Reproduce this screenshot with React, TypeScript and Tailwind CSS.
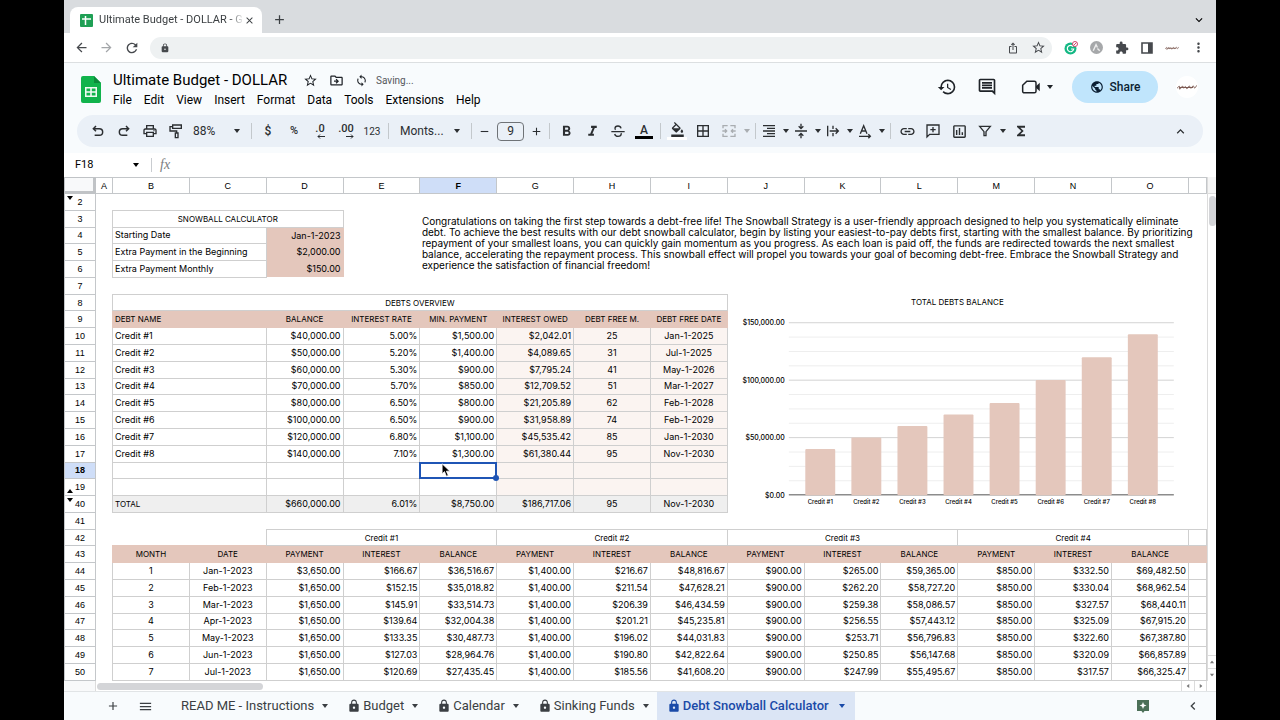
import React from 'react';
import {
  MdAdd, MdArrowBack, MdArrowForward, MdBorderAll, MdClose, MdExtension, MdFormatAlignRight,
  MdFormatBold, MdFormatColorFill, MdFormatItalic, MdFunctions, MdHistory, MdIosShare, MdKeyboardArrowDown,
  MdKeyboardArrowLeft, MdKeyboardArrowUp, MdLink, MdLock, MdMenu, MdMoreVert, MdOutlineDriveFileMove,
  MdOutlineInsertChart, MdOutlineInsertComment, MdOutlinePrint, MdPublic, MdRefresh,
  MdRemove, MdStarBorder, MdSync,
} from 'react-icons/md';

const MENUS = ['File', 'Edit', 'View', 'Insert', 'Format', 'Data', 'Tools', 'Extensions', 'Help'];
const COLUMNS = ['A', 'B', 'C', 'D', 'E', 'F', 'G', 'H', 'I', 'J', 'K', 'L', 'M', 'N', 'O'];

const INTRO = [
  'Congratulations on taking the first step towards a debt-free life! The Snowball Strategy is a user-friendly approach designed to help you systematically eliminate',
  'debt. To achieve the best results with our debt snowball calculator, begin by listing your easiest-to-pay debts first, starting with the smallest balance. By prioritizing',
  'repayment of your smallest loans, you can quickly gain momentum as you progress. As each loan is paid off, the funds are redirected towards the next smallest',
  'balance, accelerating the repayment process. This snowball effect will propel you towards your goal of becoming debt-free. Embrace the Snowball Strategy and',
  'experience the satisfaction of financial freedom!',
];

const DEBTS = [
  ['Credit #1', '$40,000.00', '5.00%', '$1,500.00', '$2,042.01', '25', 'Jan-1-2025'],
  ['Credit #2', '$50,000.00', '5.20%', '$1,400.00', '$4,089.65', '31', 'Jul-1-2025'],
  ['Credit #3', '$60,000.00', '5.30%', '$900.00', '$7,795.24', '41', 'May-1-2026'],
  ['Credit #4', '$70,000.00', '5.70%', '$850.00', '$12,709.52', '51', 'Mar-1-2027'],
  ['Credit #5', '$80,000.00', '6.50%', '$800.00', '$21,205.89', '62', 'Feb-1-2028'],
  ['Credit #6', '$100,000.00', '6.50%', '$900.00', '$31,958.89', '74', 'Feb-1-2029'],
  ['Credit #7', '$120,000.00', '6.80%', '$1,100.00', '$45,535.42', '85', 'Jan-1-2030'],
  ['Credit #8', '$140,000.00', '7.10%', '$1,300.00', '$61,380.44', '95', 'Nov-1-2030'],
];

const SCHEDULE = [
  ['1', 'Jan-1-2023', '$3,650.00', '$166.67', '$36,516.67', '$1,400.00', '$216.67', '$48,816.67', '$900.00', '$265.00', '$59,365.00', '$850.00', '$332.50', '$69,482.50'],
  ['2', 'Feb-1-2023', '$1,650.00', '$152.15', '$35,018.82', '$1,400.00', '$211.54', '$47,628.21', '$900.00', '$262.20', '$58,727.20', '$850.00', '$330.04', '$68,962.54'],
  ['3', 'Mar-1-2023', '$1,650.00', '$145.91', '$33,514.73', '$1,400.00', '$206.39', '$46,434.59', '$900.00', '$259.38', '$58,086.57', '$850.00', '$327.57', '$68,440.11'],
  ['4', 'Apr-1-2023', '$1,650.00', '$139.64', '$32,004.38', '$1,400.00', '$201.21', '$45,235.81', '$900.00', '$256.55', '$57,443.12', '$850.00', '$325.09', '$67,915.20'],
  ['5', 'May-1-2023', '$1,650.00', '$133.35', '$30,487.73', '$1,400.00', '$196.02', '$44,031.83', '$900.00', '$253.71', '$56,796.83', '$850.00', '$322.60', '$67,387.80'],
  ['6', 'Jun-1-2023', '$1,650.00', '$127.03', '$28,964.76', '$1,400.00', '$190.80', '$42,822.64', '$900.00', '$250.85', '$56,147.68', '$850.00', '$320.09', '$66,857.89'],
  ['7', 'Jul-1-2023', '$1,650.00', '$120.69', '$27,435.45', '$1,400.00', '$185.56', '$41,608.20', '$900.00', '$247.99', '$55,495.67', '$850.00', '$317.57', '$66,325.47'],
];

const BALANCES = [40, 50, 60, 70, 80, 100, 120, 140];

const line = 'border border-[#cfcfcf]';
const head = 'border border-[#e4c7bc] bg-[#e4c7bc] text-center text-[8px]';

/* ---------- icons ---------- */

const SheetsLogo = () => (
  <svg viewBox="0 0 20 27" className="h-[27px] w-5">
    <path d="M2 0h11l7 7v18a2 2 0 0 1-2 2H2a2 2 0 0 1-2-2V2a2 2 0 0 1 2-2z" fill="#11b34c" />
    <path d="M13 0l7 7h-7z" fill="#0b8a3a" />
    <path d="M4 11h12v10H4zM5.500 12.500v2.700h3.700v-2.700zM10.800 12.500v2.700h3.700v-2.700zM5.500 16.800v2.700h3.700v-2.700zM10.800 16.800v2.700h3.700v-2.700z" fill="#f1fbf4" fillRule="evenodd" />
  </svg>
);

const Favicon = () => (
  <svg viewBox="0 0 13 13" className="h-[13px] w-[13px] shrink-0">
    <rect width="13" height="13" rx="1" fill="#1fa055" />
    <path d="M5.500 2v9M2 5h9" stroke="#fff" strokeWidth="1.500" />
  </svg>
);

const Undo = ({ flip }: { flip?: boolean }) => (
  <svg viewBox="0 0 24 24" className={flip ? 'h-4 w-4 -scale-x-100' : 'h-4 w-4'} fill="none" stroke="currentColor" strokeWidth="2.200">
    <path d="M9 4.500L5 8.500l4 4M5.500 8.500h8.500a5 5 0 0 1 0 10H7" />
  </svg>
);

const PaintRoller = () => (
  <svg viewBox="0 0 24 24" className="h-4 w-4" fill="none" stroke="currentColor" strokeWidth="2">
    <path d="M7 3h13v5H7zM7 5.500H3v6.500h10v3M11 15h4v7h-4z" />
  </svg>
);

const Decimal = ({ text, more }: { text: string; more?: boolean }) => (
  <span className="flex flex-col items-center text-[11px] leading-[10px] font-medium">
    {text}
    <svg viewBox="0 0 8 5" className={more ? 'h-[5px] w-2 self-end' : 'h-[5px] w-2 -scale-x-100 self-end'} fill="none" stroke="currentColor">
      <path d="M0 2.500h7M5 .5l2 2-2 2" />
    </svg>
  </span>
);

const Strike = () => (
  <svg viewBox="0 0 24 24" className="h-4 w-4" fill="none" stroke="currentColor" strokeWidth="2">
    <path d="M2 13h20M16.500 8c-.5-2.500-2.500-3.500-4.500-3.500-2.500 0-4.500 1.300-4.500 3.500 0 .8.300 1.500.8 2M7 16.500c.6 2.300 2.700 3.500 5 3.500 2.600 0 4.800-1.200 4.800-3.500 0-.5-.1-1-.3-1.300" />
  </svg>
);

const MergeCells = () => (
  <svg viewBox="0 0 24 24" className="h-4 w-4" fill="none" stroke="#a9adb1" strokeWidth="2">
    <path d="M10 4H3v4M14 4h7v4M10 20H3v-4M14 20h7v-4M2 12h6M6 9.500l2.500 2.500L6 14.500M22 12h-6M18 9.500L15.500 12l2.500 2.500" />
  </svg>
);

const AlignMiddle = () => (
  <svg viewBox="0 0 24 24" className="h-4 w-4" fill="none" stroke="currentColor" strokeWidth="2">
    <path d="M3 12h18M12 1v7M12 23v-7M8.500 5L12 8.500 15.500 5M8.500 19l3.500-3.500 3.500 3.500" />
  </svg>
);

const Overflow = () => (
  <svg viewBox="0 0 24 24" className="h-4 w-4" fill="none" stroke="currentColor" strokeWidth="2">
    <path d="M4 4v16M12 4v5M12 15v5M7 12h13M16 8l4 4-4 4" />
  </svg>
);

const Rotate = () => (
  <svg viewBox="0 0 24 24" className="h-4 w-4" fill="none" stroke="currentColor" strokeWidth="2">
    <path d="M5 16l5-12 5 12M7 12h6M3 20h17M17 17l3 3-3 3" />
  </svg>
);

const AddComment = () => (
  <svg viewBox="0 0 24 24" className="h-4 w-4" fill="none" stroke="currentColor" strokeWidth="2">
    <path d="M3 3h18v14H7l-4 4zM12 6v8M8 10h8" />
  </svg>
);

const Funnel = () => (
  <svg viewBox="0 0 24 24" className="h-4 w-4" fill="none" stroke="currentColor" strokeWidth="2">
    <path d="M4 5h16l-6.500 8v6h-3v-6z" />
  </svg>
);

const MeetCamera = () => (
  <svg viewBox="0 0 24 24" className="h-5 w-5" fill="none" stroke="currentColor" strokeWidth="1.800">
    <path d="M7 5h9a2 2 0 0 1 2 2v10a2 2 0 0 1-2 2H4a2 2 0 0 1-2-2v-7z" />
    <path d="M18 11l4.500-4v10L18 13z" fill="currentColor" stroke="none" />
  </svg>
);

const Scribble = ({ className }: { className: string }) => (
  <svg viewBox="0 0 20 6" className={className} fill="none" stroke="#7d5a52" strokeWidth="1">
    <path d="M0 4.500c2-3 3-3 2.500-.5S4 4.500 5 2.500s1 2.500 2 1.500 1-2.500 2-.5 1 1.500 2 0 1-2.500 2-.5 1 1.500 2 0 1.500-1.500 2 .2 1.500.6 2.500-1.700" />
    <path d="M3 3.500h13" />
  </svg>
);

const Caret = ({ className = '' }: { className?: string }) => (
  <svg viewBox="0 0 6 4" className={`h-1 w-1.5 shrink-0 ${className}`}>
    <path d="M0 0h6L3 4z" fill="currentColor" />
  </svg>
);

/* ---------- browser chrome ---------- */

const TabStrip = () => (
  <div className="flex h-[33px] shrink-0 items-end bg-[#d9dcdf] pl-1.5">
    <div className="flex h-[26px] w-48 items-center rounded-t-lg bg-white pr-[7px] pl-2.5 text-[#3c4043]">
      <Favicon />
      <span className="ml-1.5 flex-1 mask-r-from-90% text-[11px] whitespace-nowrap">Ultimate Budget - DOLLAR - G</span>
      <button aria-label="Close tab"><MdClose size={11} /></button>
    </div>
    <button aria-label="New tab" className="mb-1.5 ml-2.5 text-[#3c4043]"><MdAdd size={15} /></button>
    <button aria-label="Search tabs" className="mr-2.5 mb-1.5 ml-auto"><MdKeyboardArrowDown size={14} /></button>
  </div>
);

const AddressRow = () => (
  <div className="flex h-[30px] shrink-0 items-center border-b border-[#dcdfe1] bg-white pr-2.5 pl-2.5 text-[#46494d]">
    <button aria-label="Back"><MdArrowBack size={15} /></button>
    <button aria-label="Forward" className="ml-2.5 text-[#a3a6a9]"><MdArrowForward size={15} /></button>
    <button aria-label="Reload" className="ml-2.5"><MdRefresh size={16} /></button>
    <div className="ml-2.5 flex h-[22px] flex-1 items-center rounded-full bg-[#eef1f2] pr-1.5 pl-2.5">
      <MdLock size={10} />
      <input aria-label="Address" className="min-w-0 flex-1 bg-transparent text-xs outline-none" />
      <button aria-label="Share page"><MdIosShare size={12} /></button>
      <button aria-label="Bookmark" className="ml-3"><MdStarBorder size={15} /></button>
    </div>
    <div className="ml-3 flex items-center gap-3">
      <svg viewBox="0 0 14 14" className="h-3.5 w-3.5">
        <circle cx="6.500" cy="7.500" r="6" fill="#14b884" />
        <path d="M9 5.500A3.200 3.200 0 1 0 9.700 8H7" fill="none" stroke="#fff" strokeWidth="1.200" />
        <circle cx="11" cy="3" r="2.500" fill="#fff" stroke="#d2466c" />
        <path d="M9.500 4.500l3-3" stroke="#d2466c" />
      </svg>
      <svg viewBox="0 0 14 14" className="h-[13px] w-[13px]">
        <circle cx="7" cy="7" r="7" fill="#a6a8aa" />
        <path d="M3.500 10.500l3-6.500 1.500 3M8 8l2.500 2.500" fill="none" stroke="#eee" strokeWidth="1.500" />
      </svg>
      <MdExtension size={14} />
      <svg viewBox="0 0 12 12" className="h-3 w-3">
        <path d="M1 1h10v10H1z" fill="none" stroke="currentColor" strokeWidth="1.600" />
        <path d="M7 1h4v10H7z" fill="currentColor" />
      </svg>
      <Scribble className="h-1.5 w-3.5" />
      <button aria-label="Browser menu"><MdMoreVert size={15} /></button>
    </div>
  </div>
);

/* ---------- document header ---------- */

const Header = () => (
  <div className="flex h-[52px] shrink-0 items-center pr-[18px] pl-[17px] text-[#1f2328]">
    <SheetsLogo />
    <div className="ml-3 pt-0.5">
      <div className="flex h-5 items-center">
        <input aria-label="Document name" defaultValue="Ultimate Budget - DOLLAR" className="w-[188px] bg-transparent text-[15px] text-black outline-none" />
        <button aria-label="Star" className="ml-0.5"><MdStarBorder size={15} /></button>
        <button aria-label="Move" className="ml-[11px]"><MdOutlineDriveFileMove size={15} /></button>
        <MdSync size={13} className="ml-[11px]" />
        <span className="ml-2 text-[10px] text-[#55585c]">Saving...</span>
      </div>
      <nav className="flex h-5 items-center gap-3 text-xs text-black">
        {MENUS.map((m) => <button key={m}>{m}</button>)}
      </nav>
    </div>
    <div className="ml-auto flex items-center pb-1">
      <button aria-label="Version history"><MdHistory size={20} /></button>
      <button aria-label="Comments" className="ml-5"><MdOutlineInsertComment size={20} /></button>
      <button aria-label="Call" className="ml-6 flex items-center gap-1.5"><MeetCamera /><Caret /></button>
      <button className="ml-[19px] flex h-8 w-[86px] items-center justify-center gap-1.5 rounded-full bg-[#c0e5fc] text-xs font-medium text-[#0b1f33]">
        <MdPublic size={14} />Share
      </button>
      <div className="ml-[18px] flex h-[22px] w-[22px] items-center justify-center rounded-full bg-white">
        <Scribble className="h-1.5 w-5" />
      </div>
    </div>
  </div>
);

const Tool = ({ label, wide, children }: { label: string; wide?: boolean; children: React.ReactNode }) => (
  <button aria-label={label} className={`flex h-6 shrink-0 items-center justify-center gap-1.5 ${wide ? 'w-8' : 'w-[26px]'}`}>
    {children}
  </button>
);

const Divider = () => <div className="mx-[3px] h-4 w-px shrink-0 bg-[#c3c8cc]" />;

const Toolbar = () => (
  <div className="mx-[13px] mb-1.5 flex h-8 shrink-0 items-center rounded-full bg-[#eaf0f7] pr-[15px] pl-2 text-[#2b2e31]">
    <Tool label="Undo"><Undo /></Tool>
    <Tool label="Redo"><Undo flip /></Tool>
    <Tool label="Print"><MdOutlinePrint size={16} /></Tool>
    <Tool label="Paint format"><PaintRoller /></Tool>
    <label className="ml-1 flex w-[55px] items-center justify-between pr-2">
      <select aria-label="Zoom" defaultValue="88%" className="appearance-none bg-transparent text-xs outline-none"><option>88%</option></select>
      <Caret />
    </label>
    <Divider />
    <Tool label="Currency"><span className="text-xs font-medium">$</span></Tool>
    <Tool label="Percent"><span className="text-[11px] font-medium">%</span></Tool>
    <Tool label="Decrease decimals"><Decimal text=".0" /></Tool>
    <Tool label="Increase decimals"><Decimal text=".00" more /></Tool>
    <Tool label="More formats"><span className="text-[10px]">123</span></Tool>
    <Divider />
    <label className="flex w-[76px] items-center justify-between pr-2 pl-2">
      <select aria-label="Font" defaultValue="Monts..." className="appearance-none bg-transparent text-xs outline-none"><option>Monts...</option></select>
      <Caret />
    </label>
    <Divider />
    <button aria-label="Smaller" className="ml-[3px]"><MdRemove size={13} /></button>
    <input aria-label="Font size" defaultValue="9" className="mx-1.5 h-[19px] w-[27px] rounded border border-[#6f7377] bg-transparent text-center text-xs outline-none" />
    <button aria-label="Larger" className="mr-[3px]"><MdAdd size={13} /></button>
    <Divider />
    <Tool label="Bold"><MdFormatBold size={17} /></Tool>
    <Tool label="Italic"><MdFormatItalic size={17} /></Tool>
    <Tool label="Strikethrough"><Strike /></Tool>
    <Tool label="Text color">
      <span className="flex w-[18px] flex-col items-center border-b-3 border-black text-xs leading-3 font-medium">A</span>
    </Tool>
    <Divider />
    <Tool label="Fill color">
      <span className="flex w-5 flex-col items-center border-b-3 border-white"><MdFormatColorFill size={15} /></span>
    </Tool>
    <Tool label="Borders"><MdBorderAll size={16} /></Tool>
    <Tool label="Merge cells"><MergeCells /></Tool>
    <Caret className="mx-0.5 text-[#a9adb1]" />
    <Divider />
    <Tool label="Horizontal align" wide><MdFormatAlignRight size={16} /><Caret /></Tool>
    <Tool label="Vertical align" wide><AlignMiddle /><Caret /></Tool>
    <Tool label="Text wrapping" wide><Overflow /><Caret /></Tool>
    <Tool label="Text rotation" wide><Rotate /><Caret /></Tool>
    <Divider />
    <Tool label="Insert link"><MdLink size={17} /></Tool>
    <Tool label="Insert comment"><AddComment /></Tool>
    <Tool label="Insert chart"><MdOutlineInsertChart size={17} /></Tool>
    <Tool label="Filter"><Funnel /></Tool>
    <Caret className="mx-0.5" />
    <Tool label="Functions"><MdFunctions size={16} /></Tool>
    <button aria-label="Hide the menus" className="ml-auto"><MdKeyboardArrowUp size={15} /></button>
  </div>
);

const FormulaBar = () => (
  <div className="flex h-6 shrink-0 items-center bg-white pl-[11px]">
    <input aria-label="Name box" defaultValue="F18" className="w-[58px] bg-transparent text-[11px] outline-none" />
    <Caret />
    <div className="ml-3 h-3.5 w-px bg-[#c9ccd0]" />
    <label htmlFor="formula" className="ml-2 font-['Liberation_Serif',serif] text-sm text-[#7a7d80] italic">fx</label>
    <input id="formula" className="ml-3 flex-1 text-xs outline-none" />
  </div>
);

/* ---------- sheet ---------- */

const BalanceChart = () => (
  <svg viewBox="0 0 480 235" className="block h-[235px] w-full" role="img" aria-label="Total debts balance">
    <text x="230" y="11" textAnchor="middle" fontSize="8" className="font-['Inter',sans-serif]">TOTAL DEBTS BALANCE</text>
    {Array.from({ length: 12 }, (_, i) => (
      <path key={i} d={`M61 ${28.500 + i * 14.400}h386`} stroke={i % 4 === 0 ? '#d3d3d3' : '#eeeeee'} />
    ))}
    <path d="M61 201h386" stroke="#8c8c8c" strokeWidth="1.500" />
    {BALANCES.map((b, i) => (
      <g key={b}>
        <rect x={77.500 + i * 46.200} y={201 - b * 1.150} width="30" height={b * 1.150 + 0.500} rx="1" fill="#e4c7bc" />
        <text x={92.500 + i * 46.200} y="210" textAnchor="middle" fontSize="6" fontWeight="500">Credit #{i + 1}</text>
      </g>
    ))}
    {['$150,000.00', '$100,000.00', '$50,000.00', '$0.00'].map((t, i) => (
      <text key={t} x="57" y={31 + i * 57.600} textAnchor="end" fontSize="7" fontWeight="500">{t}</text>
    ))}
  </svg>
);

interface RowProps {
  n: number;
  caret?: 'up' | 'down';
  children?: React.ReactNode;
}

const Row: React.FC<RowProps> = ({ n, caret, children }) => (
  <tr className="h-4">
    <th className={`relative border border-[#c4c7ca] text-center font-['Liberation_Sans',sans-serif] text-[9px] ${n === 18 ? 'bg-[#cfdef8] font-bold' : 'bg-white font-normal'}`}>
      {n}
      {caret && <Caret className={caret === 'up' ? 'absolute bottom-0.5 left-0.5 rotate-180' : 'absolute top-0.5 left-0.5'} />}
    </th>
    <td />
    {children}
  </tr>
);

const EmptyDebtCells = ({ selected }: { selected?: boolean }) => (
  <>
    <td colSpan={2} className={line} />
    <td className={line} />
    <td className={line} />
    <td className={`relative ${line}`}>
      {selected && (
        <div className="absolute -inset-px border-2 border-[#1f55b5]">
          <span className="absolute -right-1 -bottom-1 h-1.5 w-1.5 rounded-full bg-[#1f55b5]" />
          <svg viewBox="0 0 12 18" className="absolute -top-px left-5 h-3.5 w-2.5">
            <path d="M1 1v13l3-3 2.500 6 2.500-1-2.500-5.500H11z" fill="#000" stroke="#fff" />
          </svg>
        </div>
      )}
    </td>
    <td className={`bg-[#fbf4f1] ${line}`} />
    <td className={`bg-[#fbf4f1] ${line}`} />
    <td className={`bg-[#fbf4f1] ${line}`} />
  </>
);

const Sheet = () => (
  <table className="h-full w-full table-fixed border-collapse font-['Inter',sans-serif] text-[9px] leading-3 text-black [&_td]:px-0.5 [&_td]:py-0 [&_th]:p-0">
    <colgroup>
      <col className="w-[31px]" />
      <col className="w-[17px]" />
      {COLUMNS.slice(1).map((c) => <col key={c} />)}
      <col className="w-[18px]" />
    </colgroup>
    <thead className="font-['Liberation_Sans',sans-serif] text-[9px]">
      <tr className="h-4">
        <th className="border border-[#c0c3c6] bg-[#f8f9fa] shadow-[inset_-2px_-2px_0_#c0c3c6]" />
        {COLUMNS.map((c) => (
          <th key={c} className={`border border-[#c4c7ca] ${c === 'F' ? 'bg-[#cfdef8] font-bold' : 'bg-white font-normal'}`}>{c}</th>
        ))}
        <th className="border border-[#c4c7ca] bg-white" />
      </tr>
    </thead>
    <tbody>
      <Row n={2} caret="down" />
      <Row n={3}>
        <td colSpan={3} className={`text-center text-[8px] ${line}`}>SNOWBALL CALCULATOR</td>
        <td />
        <td colSpan={11} rowSpan={4} className="align-middle text-[10px] leading-[11px] whitespace-nowrap">
          {INTRO.map((t) => <div key={t}>{t}</div>)}
        </td>
      </Row>
      {[['Starting Date', 'Jan-1-2023'], ['Extra Payment in the Beginning', '$2,000.00'], ['Extra Payment Monthly', '$150.00']].map(([k, v], i) => (
        <Row key={k} n={4 + i}>
          <td colSpan={2} className={line}>{k}</td>
          <td className="border-r border-[#e4c7bc] bg-[#e4c7bc] text-right">{v}</td>
        </Row>
      ))}
      <Row n={7} />
      <Row n={8}>
        <td colSpan={8} className={`text-center text-[8px] ${line}`}>DEBTS OVERVIEW</td>
        <td colSpan={7} rowSpan={14} className="!p-0 align-top">
          {/* zero height, so the chart floats over the rows without stretching them */}
          <div className="h-0"><BalanceChart /></div>
        </td>
      </Row>
      <Row n={9}>
        <td colSpan={2} className="border border-[#e4c7bc] bg-[#e4c7bc] text-[8px]">DEBT NAME</td>
        {['BALANCE', 'INTEREST RATE', 'MIN. PAYMENT', 'INTEREST OWED', 'DEBT FREE M.', 'DEBT FREE DATE'].map((t) => (
          <td key={t} className={`whitespace-nowrap ${head}`}>{t}</td>
        ))}
      </Row>
      {DEBTS.map(([name, ...vals], i) => (
        <Row key={name} n={10 + i}>
          <td colSpan={2} className={line}>{name}</td>
          {vals.map((v, j) => (
            <td key={j} className={`${line} ${j > 2 ? 'bg-[#fbf4f1]' : ''} ${j > 3 ? 'text-center' : 'text-right'}`}>{v}</td>
          ))}
        </Row>
      ))}
      <Row n={18}><EmptyDebtCells selected /></Row>
      <Row n={19} caret="up"><EmptyDebtCells /></Row>
      <Row n={40} caret="down">
        <td colSpan={2} className={`bg-[#efefef] text-[8px] ${line}`}>TOTAL</td>
        {['$660,000.00', '6.01%', '$8,750.00', '$186,717.06', '95', 'Nov-1-2030'].map((v, j) => (
          <td key={v} className={`bg-[#efefef] ${line} ${j > 3 ? 'text-center' : 'text-right'}`}>{v}</td>
        ))}
      </Row>
      <Row n={41} />
      <Row n={42}>
        <td colSpan={2} />
        {[1, 2, 3, 4].map((n) => <td key={n} colSpan={3} className={`text-center text-[8px] ${line}`}>Credit #{n}</td>)}
        <td className={line} />
      </Row>
      <Row n={43}>
        <td className={head}>MONTH</td>
        <td className={head}>DATE</td>
        {[1, 2, 3, 4].map((n) => (
          <React.Fragment key={n}>
            <td className={head}>PAYMENT</td>
            <td className={head}>INTEREST</td>
            <td className={head}>BALANCE</td>
          </React.Fragment>
        ))}
        <td className={head} />
      </Row>
      {SCHEDULE.map((vals, i) => (
        <Row key={i} n={44 + i}>
          {vals.map((v, j) => (
            <td key={j} className={`${line} ${j < 2 ? 'text-center' : 'text-right'}`}>{v}</td>
          ))}
          <td className={line} />
        </Row>
      ))}
    </tbody>
  </table>
);

const VerticalScroll = () => (
  <div className="flex w-[9px] shrink-0 flex-col items-center border-l border-[#dcdcdc] bg-white text-[#7b7b7b]">
    <div className="h-[17px] w-full border-b border-[#dcdcdc] bg-[#f5f5f5]" />
    <div className="mt-0.5 h-[30px] w-[7px] rounded-full bg-[#d4d5d8]" />
    <button aria-label="Scroll up" className="mt-auto flex h-[13px] w-full items-center justify-center border-t border-[#dcdcdc]"><Caret className="scale-75 rotate-180" /></button>
    <button aria-label="Scroll down" className="flex h-[13px] w-full items-center justify-center border-t border-[#dcdcdc]"><Caret className="scale-75" /></button>
  </div>
);

const HorizontalScroll = () => (
  <div className="flex h-2.5 shrink-0 items-center bg-white pr-[9px] text-[#7b7b7b]">
    <div className="h-full w-8 border-r border-[#dcdcdc] bg-[#f8f9fa]" />
    <div className="ml-px h-[7px] w-[166px] rounded-full bg-[#d4d5d8]" />
    <button aria-label="Scroll left" className="ml-auto flex h-full w-[13px] items-center justify-center border-l border-[#dcdcdc]"><Caret className="scale-75 rotate-90" /></button>
    <button aria-label="Scroll right" className="flex h-full w-[13px] items-center justify-center border-x border-[#dcdcdc]"><Caret className="scale-75 -rotate-90" /></button>
  </div>
);

const SheetTabs = () => (
  <div className="flex h-[29px] shrink-0 items-center border-t border-[#e1e4e6] bg-[#f8fbfd] pr-[15px] pl-[42px] text-[13px] text-[#3b3f43]">
    <button aria-label="Add sheet"><MdAdd size={14} /></button>
    <button aria-label="All sheets" className="ml-[18px]"><MdMenu size={15} /></button>
    <button className="ml-7 flex items-center gap-2">READ ME - Instructions<Caret /></button>
    {['Budget', 'Calendar', 'Sinking Funds'].map((t) => (
      <button key={t} className="ml-[19px] flex items-center">
        <MdLock size={14} className="mr-0.5" />{t}<Caret className="ml-2" />
      </button>
    ))}
    <button className="ml-2 flex h-full items-center bg-[#dbe5f5] px-2.5 font-medium text-[#1a4aa8]">
      <MdLock size={14} className="mr-0.5" />Debt Snowball Calculator<Caret className="ml-2.5" />
    </button>
    <button aria-label="Explore" className="ml-auto">
      <svg viewBox="0 0 12 13" className="h-[13px] w-3">
        <path d="M0 0h12v11H7.500L6 13l-1.500-2H0z" fill="#4c7058" />
        <path d="M6 2l1 2.500 2.500 1L7 6.500 6 9 5 6.500l-2.500-1L5 4.500z" fill="#fff" />
      </svg>
    </button>
    <button aria-label="Show side panel" className="ml-9"><MdKeyboardArrowLeft size={16} /></button>
  </div>
);

const App = () => (
  <div className="h-screen bg-black px-16 font-['Roboto',sans-serif]">
    <div className="flex h-full flex-col bg-[#f8fbfd]">
      <TabStrip />
      <AddressRow />
      <Header />
      <Toolbar />
      <FormulaBar />
      <div className="flex min-h-0 flex-1 bg-white">
        <div className="min-w-0 flex-1 overflow-hidden"><Sheet /></div>
        <VerticalScroll />
      </div>
      <HorizontalScroll />
      <SheetTabs />
    </div>
  </div>
);

export default App;
